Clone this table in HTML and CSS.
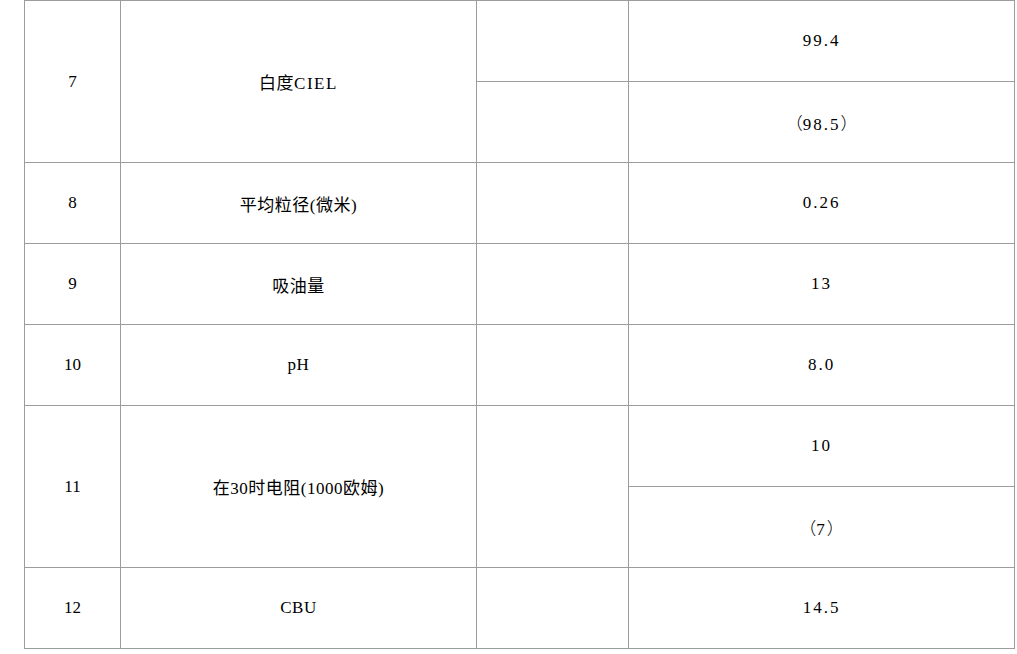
FILE: index.html
```html
<!DOCTYPE html>
<html lang="zh-CN">
<head>
<meta charset="utf-8">
<title>表格</title>
<link rel="stylesheet" href="styles.css">
</head>
<body>
<div class="page">
<table class="spec">
<colgroup>
<col class="c1"><col class="c2"><col class="c3"><col class="c4">
</colgroup>
<tbody>
<tr>
<td rowspan="2">7</td>
<td rowspan="2" class="name">白度<span class="lat">CIEL</span></td>
<td></td>
<td class="val">99.4</td>
</tr>
<tr>
<td></td>
<td class="val"><span class="fw">（</span>98.5<span class="fw">）</span></td>
</tr>
<tr>
<td>8</td>
<td class="name">平均粒径(微米)</td>
<td></td>
<td class="val">0.26</td>
</tr>
<tr>
<td>9</td>
<td class="name">吸油量</td>
<td></td>
<td class="val">13</td>
</tr>
<tr>
<td>10</td>
<td class="name">pH</td>
<td></td>
<td class="val">8.0</td>
</tr>
<tr>
<td rowspan="2">11</td>
<td rowspan="2" class="name">在30时电阻(1000欧姆)</td>
<td rowspan="2"></td>
<td class="val">10</td>
</tr>
<tr>
<td class="val"><span class="fw">（</span>7<span class="fw">）</span></td>
</tr>
<tr>
<td>12</td>
<td class="name">CBU</td>
<td></td>
<td class="val">14.5</td>
</tr>
</tbody>
</table>
</div>
</body>
</html>
```

FILE: styles.css
```css
html, body {
  margin: 0;
  padding: 0;
  background: #ffffff;
}

.page {
  padding: 0 0 0 24px;
}

.spec {
  border-collapse: collapse;
  table-layout: fixed;
  width: 990px;
  font-family: "Liberation Serif", "Noto Sans CJK SC", serif;
  font-size: 17px;
  color: #000000;
}

.c1 { width: 96px; }
.c2 { width: 356px; }
.c3 { width: 152px; }
.c4 { width: 386px; }

.spec td {
  border: 1px solid #9c9c9c;
  height: 81px;
  padding: 0;
  text-align: center;
  vertical-align: middle;
  box-sizing: border-box;
}

.name {
  letter-spacing: 0.5px;
}

.lat {
  letter-spacing: 1.5px;
}

.val {
  letter-spacing: 2px;
}

.fw {
  font-family: "Noto Sans CJK SC", sans-serif;
  letter-spacing: 0;
  font-weight: 300;
}
```
